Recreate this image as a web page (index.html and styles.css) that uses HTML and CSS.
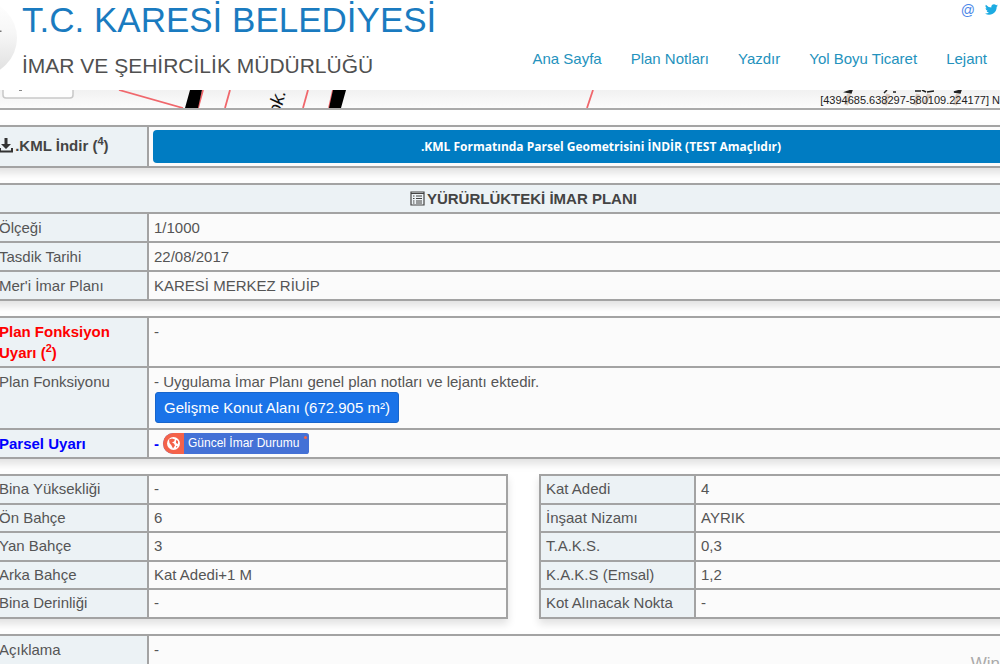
FILE: index.html
```html
<!DOCTYPE html>
<html lang="tr">
<head>
<meta charset="utf-8">
<title>T.C. Karesi Belediyesi</title>
<link rel="stylesheet" href="styles.css">
</head>
<body>
<header class="header">
  <svg class="logo" viewBox="0 0 17 90" aria-hidden="true">
    <defs><linearGradient id="disc" x1="0" y1="0" x2="0" y2="1"><stop offset="0" stop-color="#fff"/><stop offset=".45" stop-color="#f6f6f6"/><stop offset="1" stop-color="#dedede"/></linearGradient></defs>
    <circle cx="-21" cy="38" r="38" fill="url(#disc)"/>
    <path d="M0 30.500h1.500v1.500H0z" fill="#777"/>
  </svg>
  <div class="brand">
    <h1 class="brand-title">T.C. KARESİ BELEDİYESİ</h1>
    <p class="brand-sub">İMAR VE ŞEHİRCİLİK MÜDÜRLÜĞÜ</p>
  </div>
  <div class="header-side">
    <div class="social">
      <a class="at" href="#" aria-label="E-posta">@</a>
      <a href="#" aria-label="Twitter"><svg width="13" height="13" viewBox="0 0 24 24"><path fill="#1cabe2" d="M24 4.600a10 10 0 0 1-2.800.8 5 5 0 0 0 2.100-2.700 10 10 0 0 1-3.100 1.200 4.900 4.900 0 0 0-8.400 4.500A14 14 0 0 1 1.700 3.200a4.900 4.900 0 0 0 1.500 6.500 4.900 4.900 0 0 1-2.200-.6 4.900 4.900 0 0 0 3.900 4.900 5 5 0 0 1-2.200.1 4.900 4.900 0 0 0 4.600 3.400A9.900 9.900 0 0 1 0 19.500a14 14 0 0 0 21.500-12.400A10 10 0 0 0 24 4.600z"/></svg></a>
    </div>
    <nav class="nav">
      <a href="#">Ana Sayfa</a>
      <a href="#">Plan Notları</a>
      <a href="#">Yazdır</a>
      <a href="#">Yol Boyu Ticaret</a>
      <a href="#">Lejant</a>
    </nav>
  </div>
</header>

<section class="map" aria-label="Harita">
  <svg class="map-art" viewBox="0 0 1000 18" preserveAspectRatio="xMinYMin slice">
    <rect x="3" y="-12" width="70" height="20" rx="3" fill="#fdfdfd" stroke="#c8c8c8" stroke-width="1.500"/>
    <path d="M19 0h3" stroke="#888" stroke-width="2"/>
    <g fill="none" stroke="#f0676c" stroke-width="1.800"><path d="M119 0l64 18M203 0l-5 18M230 0l-5 18M308 0l-5 18M333 0l-4 18M593 0l-6 18"/></g>
    <path d="M190 0h12l-4 18h-13zM333 0h13l-5 18h-12z" fill="#000"/>
    <text x="0" y="0" transform="translate(280 26) rotate(-76)" font-family="Liberation Sans" font-style="italic" font-size="19" fill="#111">ok.</text>
    <path d="M846 2l6-2-1 3zM884 3l3-3M893 2h3M915 1h6M922 0l4 2M927 2l7-1M954 2l7-2-1 3z" fill="#222" stroke="#222" stroke-width="1.500"/>
    <path d="M846 15l3-11M885 15l3-11M915 15l3-11M925 14l4-10M955 15l3-11" stroke="#d9c9bd" stroke-width="4"/>
  </svg>
  <span class="coords">[4394685.638297-580109.224177] N</span>
</section>

<main class="content">
  <table class="info">
    <colgroup><col class="label-col"><col></colgroup>
    <tr>
      <th class="label kml-label" scope="row"><svg width="14" height="15" viewBox="0 0 14 15" aria-hidden="true"><path d="M5.500 0h3v6H12L7 11 2 6h3.500z" fill="#333"/><path d="M1 10v3.500h12V10" fill="none" stroke="#333" stroke-width="2"/></svg> .KML İndir (<sup>4</sup>)</th>
      <td class="kml-cell"><button class="kml-button" type="button">.KML Formatında Parsel Geometrisini İNDİR (TEST Amaçlıdır)</button></td>
    </tr>
  </table>

  <table class="info">
    <colgroup><col class="label-col"><col></colgroup>
    <tr><th class="section" colspan="2"><svg width="15" height="15" viewBox="0 0 15 15" aria-hidden="true"><path d="M1 1h13v13H1zM1 2.500h13M6 5h6M6 7.500h6M6 10h6M6 12h6M3 5h1.500M3 7.500h1.500M3 10h1.500M3 12h1.500" fill="none" stroke="#444" stroke-width="1.200"/></svg> YÜRÜRLÜKTEKİ İMAR PLANI</th></tr>
    <tr><th class="label" scope="row">Ölçeği</th><td>1/1000</td></tr>
    <tr><th class="label" scope="row">Tasdik Tarihi</th><td>22/08/2017</td></tr>
    <tr><th class="label" scope="row">Mer'i İmar Planı</th><td>KARESİ MERKEZ RİUİP</td></tr>
  </table>

  <table class="info">
    <colgroup><col class="label-col"><col></colgroup>
    <tr><th class="label warn" scope="row">Plan Fonksiyon<br>Uyarı (<sup>2</sup>)</th><td>-</td></tr>
    <tr><th class="label" scope="row">Plan Fonksiyonu</th><td>- Uygulama İmar Planı genel plan notları ve lejantı ektedir.<br><button class="area-button" type="button">Gelişme Konut Alanı (672.905 m²)</button></td></tr>
    <tr><th class="label notice" scope="row">Parsel Uyarı</th><td><div class="status"><b>-</b><button class="status-button" type="button"><span class="status-icon"><svg width="13" height="13" viewBox="0 0 13 13" aria-hidden="true"><circle cx="6.500" cy="6.500" r="6.500" fill="#fff"/><path d="M2 2.500l3-1 3 1-1 2-2 1 2 1 1 2-2 3-1.500-3L2.500 6zM9 3l2 1v3l-2-1zM9 9l1.500 0-1 2z" fill="#f4624a"/></svg></span><span class="status-text">Güncel İmar Durumu</span><span class="status-dot"></span></button></div></td></tr>
  </table>

  <div class="pair">
    <table class="info specs">
      <colgroup><col class="label-col"><col></colgroup>
      <tr><th class="label" scope="row">Bina Yüksekliği</th><td>-</td></tr>
      <tr><th class="label" scope="row">Ön Bahçe</th><td>6</td></tr>
      <tr><th class="label" scope="row">Yan Bahçe</th><td>3</td></tr>
      <tr><th class="label" scope="row">Arka Bahçe</th><td>Kat Adedi+1 M</td></tr>
      <tr><th class="label" scope="row">Bina Derinliği</th><td>-</td></tr>
    </table>
    <table class="info specs">
      <colgroup><col class="label-col"><col></colgroup>
      <tr><th class="label" scope="row">Kat Adedi</th><td>4</td></tr>
      <tr><th class="label" scope="row">İnşaat Nizamı</th><td>AYRIK</td></tr>
      <tr><th class="label" scope="row">T.A.K.S.</th><td>0,3</td></tr>
      <tr><th class="label" scope="row">K.A.K.S (Emsal)</th><td>1,2</td></tr>
      <tr><th class="label" scope="row">Kot Alınacak Nokta</th><td>-</td></tr>
    </table>
  </div>

  <table class="info">
    <colgroup><col class="label-col"><col></colgroup>
    <tr><th class="label" scope="row">Açıklama</th><td class="tall">-</td></tr>
  </table>
</main>
<div class="watermark">Win</div>
</body>
</html>
```

FILE: styles.css
```css
* { box-sizing: border-box; }

body {
  margin: 0;
  height: 100vh;
  overflow: hidden;
  position: relative;
  background: #fff;
  color: #555;
  font-family: "Liberation Sans", Arial, sans-serif;
  font-size: 15px;
  line-height: 21px;
}

button { font-family: inherit; border: 0; margin: 0; cursor: pointer; }

.header { display: flex; height: 90px; background: #fff; }
.logo { width: 17px; height: 90px; flex: none; margin-right: 5px; }
.brand { flex: none; white-space: nowrap; }
.brand-title { margin: 0; font-size: 35px; line-height: 40px; font-weight: 400; color: #1a7bc0; }
.brand-sub { margin: 14px 0 0; font-size: 21px; line-height: 24px; color: #505050; }
.header-side { flex: 1; display: flex; flex-direction: column; }
.social { display: flex; justify-content: flex-end; align-items: center; gap: 10px; height: 20px; padding-right: 2px; }
.social a { text-decoration: none; line-height: 13px; }
.social .at { color: #4a86e8; font-size: 14px; }
.nav { display: flex; justify-content: flex-end; gap: 29px; margin-top: 28px; padding-right: 13px; white-space: nowrap; }
.nav a { color: #2492bd; text-decoration: none; }

.map {
  position: relative;
  height: 20px;
  border-bottom: 2px solid #aaa;
  background: linear-gradient(#f1f1f1, #fcfcfc);
  overflow: hidden;
}
.map-art { display: block; width: 100%; min-width: 1000px; height: 18px; }
.coords {
  position: absolute;
  top: 3px;
  right: 0;
  font-size: 11px;
  line-height: 14px;
  color: #222;
  white-space: nowrap;
}

.content {
  display: flex;
  flex-direction: column;
  gap: 15px;
  margin: 15px -55px 0 -8px;
}
.info {
  width: 100%;
  table-layout: fixed;
  border-collapse: collapse;
  background: #fbfbfb;
  box-shadow: 0 5px 8px rgba(0, 0, 0, 0.12);
}
.label-col { width: 155px; }
.info th, .info td {
  border: 2px solid #a3a3a3;
  padding: 3px 5px;
  text-align: left;
  vertical-align: top;
  font-weight: 400;
}
.info .label { background: #ecf2f5; }
.info .section { background: #ecf2f5; text-align: center; font-weight: 700; color: #444; }
.section svg, .kml-label svg { vertical-align: -2px; margin-right: -2px; }
.info .kml-label { font-weight: 700; color: #444; padding-top: 8px; }
.info .kml-cell { padding: 3px 4px; }
.kml-button {
  display: block;
  width: 100%;
  height: 33px;
  border-radius: 4px;
  background: #007cc2;
  color: #fff;
  font-family: "Open Sans", "Noto Sans", sans-serif;
  font-size: 12px;
  font-weight: 700;
}
.info .warn { color: #f00; font-weight: 700; }
.info .notice { color: #00f; font-weight: 700; }
sup { font-size: 11px; line-height: 0; }
.area-button {
  display: block;
  height: 31px;
  margin: 0 0 2px 1px;
  padding: 0 8px;
  border: 1px solid #1765cc;
  border-radius: 3px;
  background: #1a73e8;
  color: #fff;
  font-size: 15px;
}
.status { display: flex; align-items: center; gap: 4px; color: #00f; }
.status-button {
  position: relative;
  display: flex;
  height: 21px;
  padding: 0;
  border-radius: 11px 3px 3px 11px;
  overflow: hidden;
  background: #4471d6;
  color: #fff;
  font-size: 12px;
  line-height: 21px;
}
.status-icon { display: grid; place-items: center; width: 21px; background: #f4624a; }
.status-text { padding: 0 10px 0 4px; }
.status-dot { position: absolute; top: 3px; right: 2px; width: 3px; height: 3px; border-radius: 50%; background: #f4624a; }

.pair { display: grid; grid-template-columns: 1fr 1fr; gap: 31px; }
.specs { height: 145px; }
.specs th, .specs td { line-height: 20px; }
.info .tall { height: 60px; }

.watermark { position: absolute; right: 0; bottom: -10px; font-size: 17px; line-height: 20px; color: #aaa; }
```
